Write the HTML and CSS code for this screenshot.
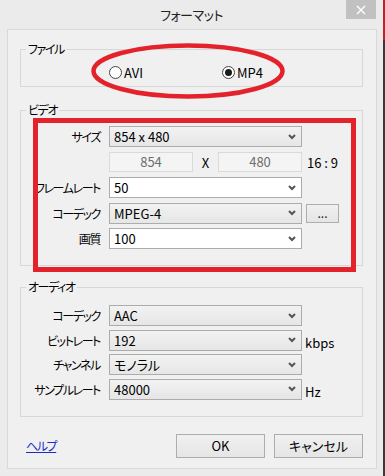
FILE: index.html
```html
<!DOCTYPE html>
<html lang="ja">
<head>
  <meta charset="UTF-8">
  <meta name="viewport" content="width=device-width, initial-scale=1.0">
  <title>フォーマット</title>
  <link rel="stylesheet" href="styles.css">
</head>
<body>
  <div class="window">
    <div class="titlebar">
      <span></span>
      <div class="title">フォーマット</div>
      <div class="close">
        <svg width="10" height="10" viewBox="0 0 10 10"><path d="M1 1L9 9M9 1L1 9" stroke="#fff" stroke-width="1.4"/></svg>
      </div>
    </div>

    <div class="panel">
      <fieldset class="group group-file">
        <legend>ファイル</legend>
        <div class="radios">
          <label class="radio"><span class="dot"></span>AVI</label>
          <label class="radio checked"><span class="dot"></span>MP4</label>
        </div>
      </fieldset>

      <fieldset class="group group-video">
        <legend>ビデオ</legend>
        <div class="form">
          <label>サイズ</label>
          <div class="select gray"><span>854 x 480</span><svg class="chev" width="8" height="6" viewBox="0 0 8 6"><path d="M1 1L4 4L7 1" fill="none" stroke="#555" stroke-width="2"/></svg></div>
          <span></span>

          <span></span>
          <div class="dims">
            <div class="field">854</div>
            <span class="times">X</span>
            <div class="field">480</div>
          </div>
          <span class="extra ratio">16 : 9</span>

          <label>フレームレート</label>
          <div class="select"><span>50</span><svg class="chev" width="8" height="6" viewBox="0 0 8 6"><path d="M1 1L4 4L7 1" fill="none" stroke="#555" stroke-width="2"/></svg></div>
          <span></span>

          <label>コーデック</label>
          <div class="select gray"><span>MPEG-4</span><svg class="chev" width="8" height="6" viewBox="0 0 8 6"><path d="M1 1L4 4L7 1" fill="none" stroke="#555" stroke-width="2"/></svg></div>
          <button class="more">...</button>

          <label>画質</label>
          <div class="select"><span>100</span><svg class="chev" width="8" height="6" viewBox="0 0 8 6"><path d="M1 1L4 4L7 1" fill="none" stroke="#555" stroke-width="2"/></svg></div>
          <span></span>
        </div>
      </fieldset>

      <fieldset class="group group-audio">
        <legend>オーディオ</legend>
        <div class="form">
          <label>コーデック</label>
          <div class="select gray"><span>AAC</span><svg class="chev" width="8" height="6" viewBox="0 0 8 6"><path d="M1 1L4 4L7 1" fill="none" stroke="#555" stroke-width="2"/></svg></div>
          <span></span>

          <label>ビットレート</label>
          <div class="select gray"><span>192</span><svg class="chev" width="8" height="6" viewBox="0 0 8 6"><path d="M1 1L4 4L7 1" fill="none" stroke="#555" stroke-width="2"/></svg></div>
          <span class="extra unit">kbps</span>

          <label>チャンネル</label>
          <div class="select gray"><span>モノラル</span><svg class="chev" width="8" height="6" viewBox="0 0 8 6"><path d="M1 1L4 4L7 1" fill="none" stroke="#555" stroke-width="2"/></svg></div>
          <span></span>

          <label>サンプルレート</label>
          <div class="select gray"><span>48000</span><svg class="chev" width="8" height="6" viewBox="0 0 8 6"><path d="M1 1L4 4L7 1" fill="none" stroke="#555" stroke-width="2"/></svg></div>
          <span class="extra unit">Hz</span>
        </div>
      </fieldset>

      <div class="actions">
        <a class="help" href="#">ヘルプ</a>
        <button class="btn">OK</button>
        <button class="btn">キャンセル</button>
      </div>
    </div>

    <!-- red markers drawn over the dialog -->
    <svg class="mark-ellipse" width="200" height="62" viewBox="0 0 200 62">
      <ellipse cx="97" cy="30" rx="94.5" ry="25.5" fill="none" stroke="#e3222b" stroke-width="4.5"/>
    </svg>
    <div class="mark-rect"></div>
  </div>
  <div class="edge"></div>
</body>
</html>
```

FILE: styles.css
```css
body {
  margin: 0;
  width: 385px;
  height: 476px;
  display: flex;
  background-color: #2e2e2e;
  font-family: "Noto Sans CJK JP", "Noto Sans", sans-serif;
  font-feature-settings: "palt";
  font-size: 12px;
  color: #000;
  overflow: hidden;
}

.window {
  position: relative;
  width: 383px;
  height: 476px;
  background-color: #ebebeb;
}

.edge {
  width: 2px;
  height: 476px;
  background: linear-gradient(#c8202a 0, #c8202a 40px, #3a3a3a 40px);
}

.titlebar {
  height: 29px;
  display: grid;
  grid-template-columns: 1fr auto 1fr;
  align-items: start;
}

.title {
  font-size: 13px;
  letter-spacing: -0.5px;
  line-height: 16px;
  margin-top: 7px;
  color: #222;
}

.close {
  justify-self: end;
  margin-right: 7px;
  width: 30px;
  height: 19px;
  background-color: #c1c1c1;
  display: flex;
  align-items: center;
  justify-content: center;
}

.panel {
  margin-left: 7px;
  width: 370px;
  box-sizing: border-box;
  background-color: #f0f0f0;
  border: 1px solid #d9d9d9;
  padding: 12px 13px 10px 12px;
}

.group {
  margin: 0;
  padding: 0;
  width: 343px;
  box-sizing: border-box;
  border: 1px solid #d7d7d7;
  min-width: 0;
}

.group legend {
  margin-left: 5px;
  padding: 0 2px;
  font-size: 12px;
  letter-spacing: -1.4px;
  line-height: 14px;
}

.group-file {
  padding: 8px 0 6px;
}

.radios {
  display: flex;
  height: 16px;
  align-items: center;
  padding-left: 88px;
  font-size: 13px;
}

.radio {
  display: flex;
  align-items: center;
  gap: 2px;
  width: 113px;
}

.dot {
  width: 11px;
  height: 11px;
  border: 1px solid #444;
  border-radius: 50%;
  background-color: #fff;
  display: flex;
  align-items: center;
  justify-content: center;
}

.checked .dot::after {
  content: "";
  width: 7px;
  height: 7px;
  border-radius: 50%;
  background-color: #1a1a1a;
}

.group-video {
  margin-top: 16px;
  padding: 9px 0 16px;
}

.group-audio {
  margin-top: 14px;
  padding: 11px 0 16px;
}

.form {
  display: grid;
  grid-template-columns: 88px 193px auto;
  grid-auto-rows: 21px;
  row-gap: 4.5px;
  align-items: center;
}

.group-audio .form {
  row-gap: 3.66px;
}

.form label {
  text-align: right;
  padding-right: 9px;
  white-space: nowrap;
  font-size: 12px;
  letter-spacing: -1.4px;
}

.select {
  height: 21px;
  box-sizing: border-box;
  border: 1px solid #acacac;
  background-color: #fff;
  display: flex;
  align-items: center;
  justify-content: space-between;
  padding: 0 5px 0 4px;
  font-size: 13px;
}

.select.gray {
  background: linear-gradient(#f2f2f2, #e6e6e6);
}

.chev {
  display: block;
}

.dims {
  display: flex;
  align-items: center;
  height: 20px;
}

.field {
  width: 84px;
  height: 20px;
  box-sizing: border-box;
  border: 1px solid #dadada;
  background-color: #f4f4f4;
  color: #6d6d6d;
  font-size: 13px;
  line-height: 18px;
  text-align: center;
}

.times {
  width: 25px;
  text-align: center;
  font-size: 13px;
}

.extra {
  font-size: 13px;
  margin-left: 3px;
}

.ratio {
  margin-left: 5px;
}

.unit {
  padding-top: 4px;
}

.more {
  margin-left: 4px;
  width: 33px;
  height: 19px;
  padding: 0;
  border: 1px solid #adadad;
  background: linear-gradient(#f0f0f0, #e5e5e5);
  font-family: inherit;
  font-size: 12px;
  line-height: 10px;
  color: #222;
}

.actions {
  margin-top: 17px;
  display: flex;
  align-items: center;
  height: 24px;
}

.help {
  margin-left: 6px;
  color: #1b2dc4;
  font-size: 12px;
  letter-spacing: -1.4px;
  text-decoration: underline;
  flex: 1;
}

.btn {
  width: 89px;
  height: 24px;
  margin-left: 9px;
  padding: 0;
  border: 1px solid #adadad;
  background: linear-gradient(#f0f0f0, #e5e5e5);
  font-family: inherit;
  font-feature-settings: "palt";
  font-size: 13px;
  color: #000;
}

.mark-ellipse {
  position: absolute;
  left: 91px;
  top: 41px;
}

.mark-rect {
  position: absolute;
  left: 33px;
  top: 118px;
  width: 323px;
  height: 154px;
  box-sizing: border-box;
  border: 5px solid #e3222b;
}
```
